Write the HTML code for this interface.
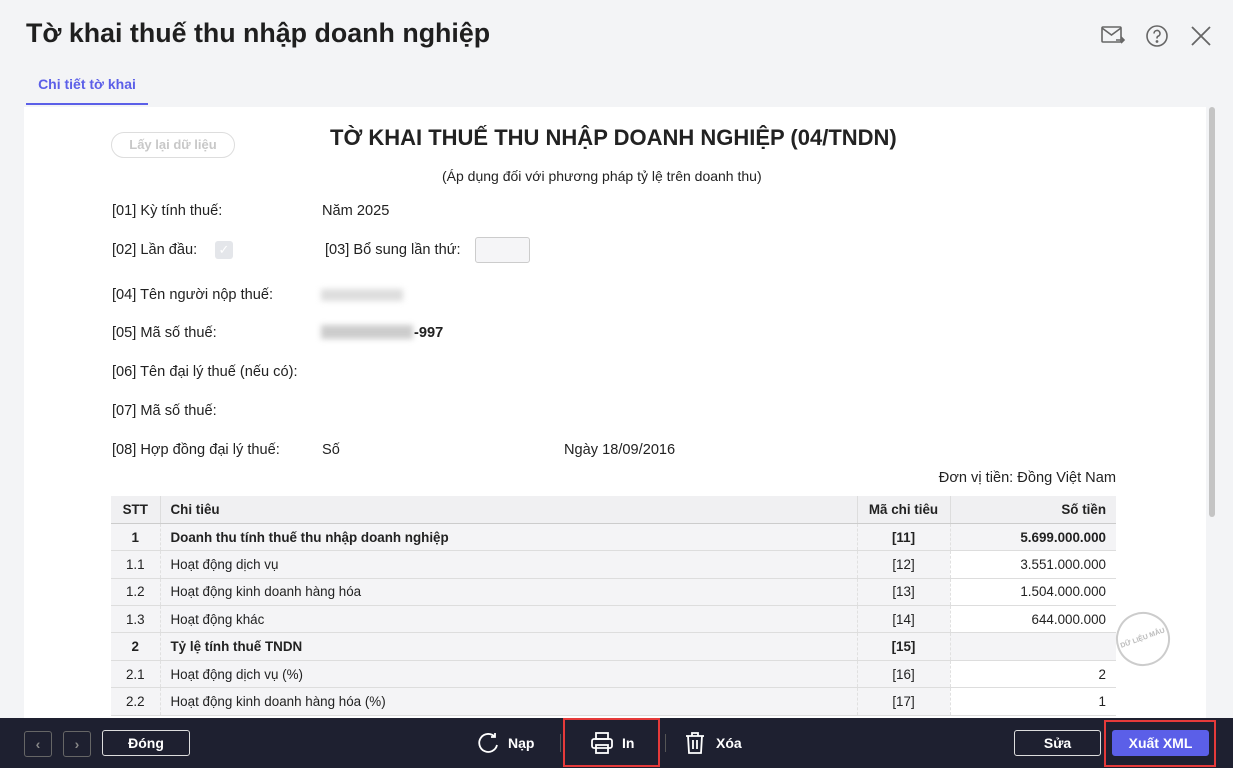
<!DOCTYPE html>
<html><head><meta charset="utf-8"><style>
*{box-sizing:border-box;margin:0;padding:0}
body{width:1233px;height:768px;overflow:hidden;font-family:"Liberation Sans",sans-serif;background:#f3f4f6;position:relative;color:#222}
.title{position:absolute;left:26px;top:18px;font-size:26.8px;font-weight:bold;color:#1f1f1f}
.tab{position:absolute;left:26px;top:76px;width:122px;height:29px;border-bottom:2px solid #5b5fe8;color:#5b5fe8;font-size:14px;font-weight:bold;text-align:center}
.content{position:absolute;left:24px;top:107px;width:1182px;height:611px;background:#fff;overflow:hidden}
.sb{position:absolute;left:1209px;top:107px;width:6px;height:410px;background:#c4c4c4;border-radius:3px}
.t{position:absolute;font-size:14.6px;white-space:nowrap}
.btn0{position:absolute;left:87px;top:25px;width:124px;height:26px;border:1px solid #ddd;border-radius:13px;color:#c8c8c8;font-size:13px;font-weight:bold;text-align:center;line-height:24px}
table{position:absolute;left:87px;top:389px;width:1005px;border-collapse:collapse;font-size:13.4px}
td{height:27.4px;border-bottom:1px solid #ddd;background:#f4f4f6;padding:0 10px;border-left:1px dashed #e0e0e0}
td:first-child{border-left:none}
tr.h td{background:#f0f0f2;font-weight:bold;border-bottom:1px solid #ccc;border-left:1px solid #ddd}
tr.h td:first-child{border-left:none}
tr.b td{font-weight:bold}
td.c{text-align:center}td.r{text-align:right}
td.w{background:#fff}
.footer{position:absolute;left:0;top:718px;width:1233px;height:50px;background:#1e2030}
.fb{position:absolute;border:1px solid #ddd;border-radius:3px;color:#fff;font-weight:bold;font-size:14px;text-align:center;line-height:24px;height:26px}
.red{position:absolute;border:2px solid #e53a3a}
</style></head><body>
<div class="title">Tờ khai thuế thu nhập doanh nghiệp</div>
<svg style="position:absolute;left:1100px;top:24px" width="26" height="24" fill="none" stroke="#666" stroke-width="1.6"><rect x="2" y="3" width="19" height="15" rx="1"/><path d="M2 4l9.5 7 9.5-7M16 16h8M21 13l3 3-3 3"/></svg>
<svg style="position:absolute;left:1145px;top:24px" width="24" height="24" fill="none" stroke="#666" stroke-width="1.6"><circle cx="12" cy="12" r="10"/><path d="M9 9.5a3 3 0 1 1 4 2.8c-1 .4-1 1-1 2.2"/><circle cx="12" cy="17.5" r=".6" fill="#666"/></svg>
<svg style="position:absolute;left:1190px;top:25px" width="22" height="22" stroke="#666" stroke-width="1.8"><path d="M2 2l18 18M20 2L2 20"/></svg>
<div class="tab">Chi tiết tờ khai</div>
<div class="content">
<div class="btn0">Lấy lại dữ liệu</div>
<div class="t" style="left:306px;top:18px;font-size:22px;font-weight:bold">TỜ KHAI THUẾ THU NHẬP DOANH NGHIỆP (04/TNDN)</div>
<div class="t" style="left:418px;top:61px;font-size:14px">(Áp dụng đối với phương pháp tỷ lệ trên doanh thu)</div>
<div class="t" style="left:88px;top:96px">[01] Kỳ tính thuế:</div><div class="t" style="left:298px;top:96px">Năm 2025</div>
<div class="t" style="left:88px;top:135px">[02] Lần đầu:</div>
<div style="position:absolute;left:191px;top:134px;width:18px;height:18px;background:#e4e6ea;border-radius:3px;color:#fff;font-size:13px;text-align:center;line-height:18px">✓</div>
<div class="t" style="left:301px;top:135px">[03] Bổ sung lần thứ:</div>
<div style="position:absolute;left:451px;top:130px;width:55px;height:26px;border:1px solid #ccc;border-radius:3px;background:#f5f5f7"></div>
<div class="t" style="left:88px;top:180px">[04] Tên người nộp thuế:</div>
<div style="position:absolute;left:297px;top:182px;width:82px;height:12px;background:#ddd;filter:blur(3px)"></div>
<div class="t" style="left:88px;top:218px">[05] Mã số thuế:</div>
<div style="position:absolute;left:297px;top:218px;width:92px;height:14px;background:#ccc;filter:blur(3px)"></div>
<div class="t" style="left:390px;top:218px;font-weight:bold">-997</div>
<div class="t" style="left:88px;top:257px">[06] Tên đại lý thuế (nếu có):</div>
<div class="t" style="left:88px;top:296px">[07] Mã số thuế:</div>
<div class="t" style="left:88px;top:335px">[08] Hợp đồng đại lý thuế:</div><div class="t" style="left:298px;top:335px">Số</div><div class="t" style="left:540px;top:335px">Ngày 18/09/2016</div>
<div class="t" style="right:90px;top:363px">Đơn vị tiền: Đồng Việt Nam</div>
<table>
<colgroup><col style="width:49px"><col style="width:697px"><col style="width:93px"><col style="width:166px"></colgroup>
<tr class="h"><td class="c">STT</td><td>Chi tiêu</td><td class="c">Mã chi tiêu</td><td class="r">Số tiền</td></tr>
<tr class="b"><td class="c">1</td><td>Doanh thu tính thuế thu nhập doanh nghiệp</td><td class="c">[11]</td><td class="r">5.699.000.000</td></tr>
<tr><td class="c">1.1</td><td>Hoạt động dịch vụ</td><td class="c">[12]</td><td class="r w">3.551.000.000</td></tr>
<tr><td class="c">1.2</td><td>Hoạt động kinh doanh hàng hóa</td><td class="c">[13]</td><td class="r w">1.504.000.000</td></tr>
<tr><td class="c">1.3</td><td>Hoạt động khác</td><td class="c">[14]</td><td class="r w">644.000.000</td></tr>
<tr class="b"><td class="c">2</td><td>Tỷ lệ tính thuế TNDN</td><td class="c">[15]</td><td class="r"></td></tr>
<tr><td class="c">2.1</td><td>Hoạt động dịch vụ (%)</td><td class="c">[16]</td><td class="r w">2</td></tr>
<tr><td class="c">2.2</td><td>Hoạt động kinh doanh hàng hóa (%)</td><td class="c">[17]</td><td class="r w">1</td></tr>
</table>
<div style="position:absolute;left:1092px;top:505px;width:54px;height:54px;border:2px solid #ccc;border-radius:50%;transform:rotate(-20deg);color:#bbb;font-size:7px;font-weight:bold;text-align:center;line-height:50px;white-space:nowrap;overflow:hidden">DỮ LIỆU MẪU</div>
</div>
<div class="sb"></div>
<div class="footer">
<div class="fb" style="left:24px;top:13px;width:28px;border-color:#666;color:#888">‹</div>
<div class="fb" style="left:63px;top:13px;width:28px;border-color:#666;color:#888">›</div>
<div class="fb" style="left:102px;top:12px;width:88px">Đóng</div>
<svg style="position:absolute;left:477px;top:14px" width="22" height="22" fill="none" stroke="#fff" stroke-width="1.8"><path d="M18 5A9 9 0 1 0 20 13M18 1v4h-4"/></svg>
<div class="t" style="left:508px;top:17px;color:#fff;font-weight:bold;font-size:14px">Nạp</div>
<div style="position:absolute;left:560px;top:16px;width:1px;height:18px;background:#555"></div>
<svg style="position:absolute;left:590px;top:14px" width="24" height="22" fill="none" stroke="#fff" stroke-width="1.8"><rect x="6" y="1" width="12" height="6"/><rect x="2" y="7" width="20" height="9" rx="2"/><rect x="6" y="13" width="12" height="8"/></svg>
<div class="t" style="left:622px;top:17px;color:#fff;font-weight:bold;font-size:14px">In</div>
<div style="position:absolute;left:665px;top:16px;width:1px;height:18px;background:#555"></div>
<svg style="position:absolute;left:684px;top:13px" width="22" height="24" fill="none" stroke="#fff" stroke-width="1.8"><path d="M2 5h18M8 5V2h6v3M4 5l1 17h12l1-17M9 9v9M13 9v9"/></svg>
<div class="t" style="left:716px;top:17px;color:#fff;font-weight:bold;font-size:14px">Xóa</div>
<div class="fb" style="left:1014px;top:12px;width:87px">Sửa</div>
<div class="fb" style="left:1112px;top:12px;width:97px;background:#5b5fe8;border-color:#5b5fe8">Xuất XML</div>
</div>
<div class="red" style="left:563px;top:718px;width:97px;height:49px"></div>
<div class="red" style="left:1104px;top:720px;width:112px;height:47px"></div>
</body></html>
